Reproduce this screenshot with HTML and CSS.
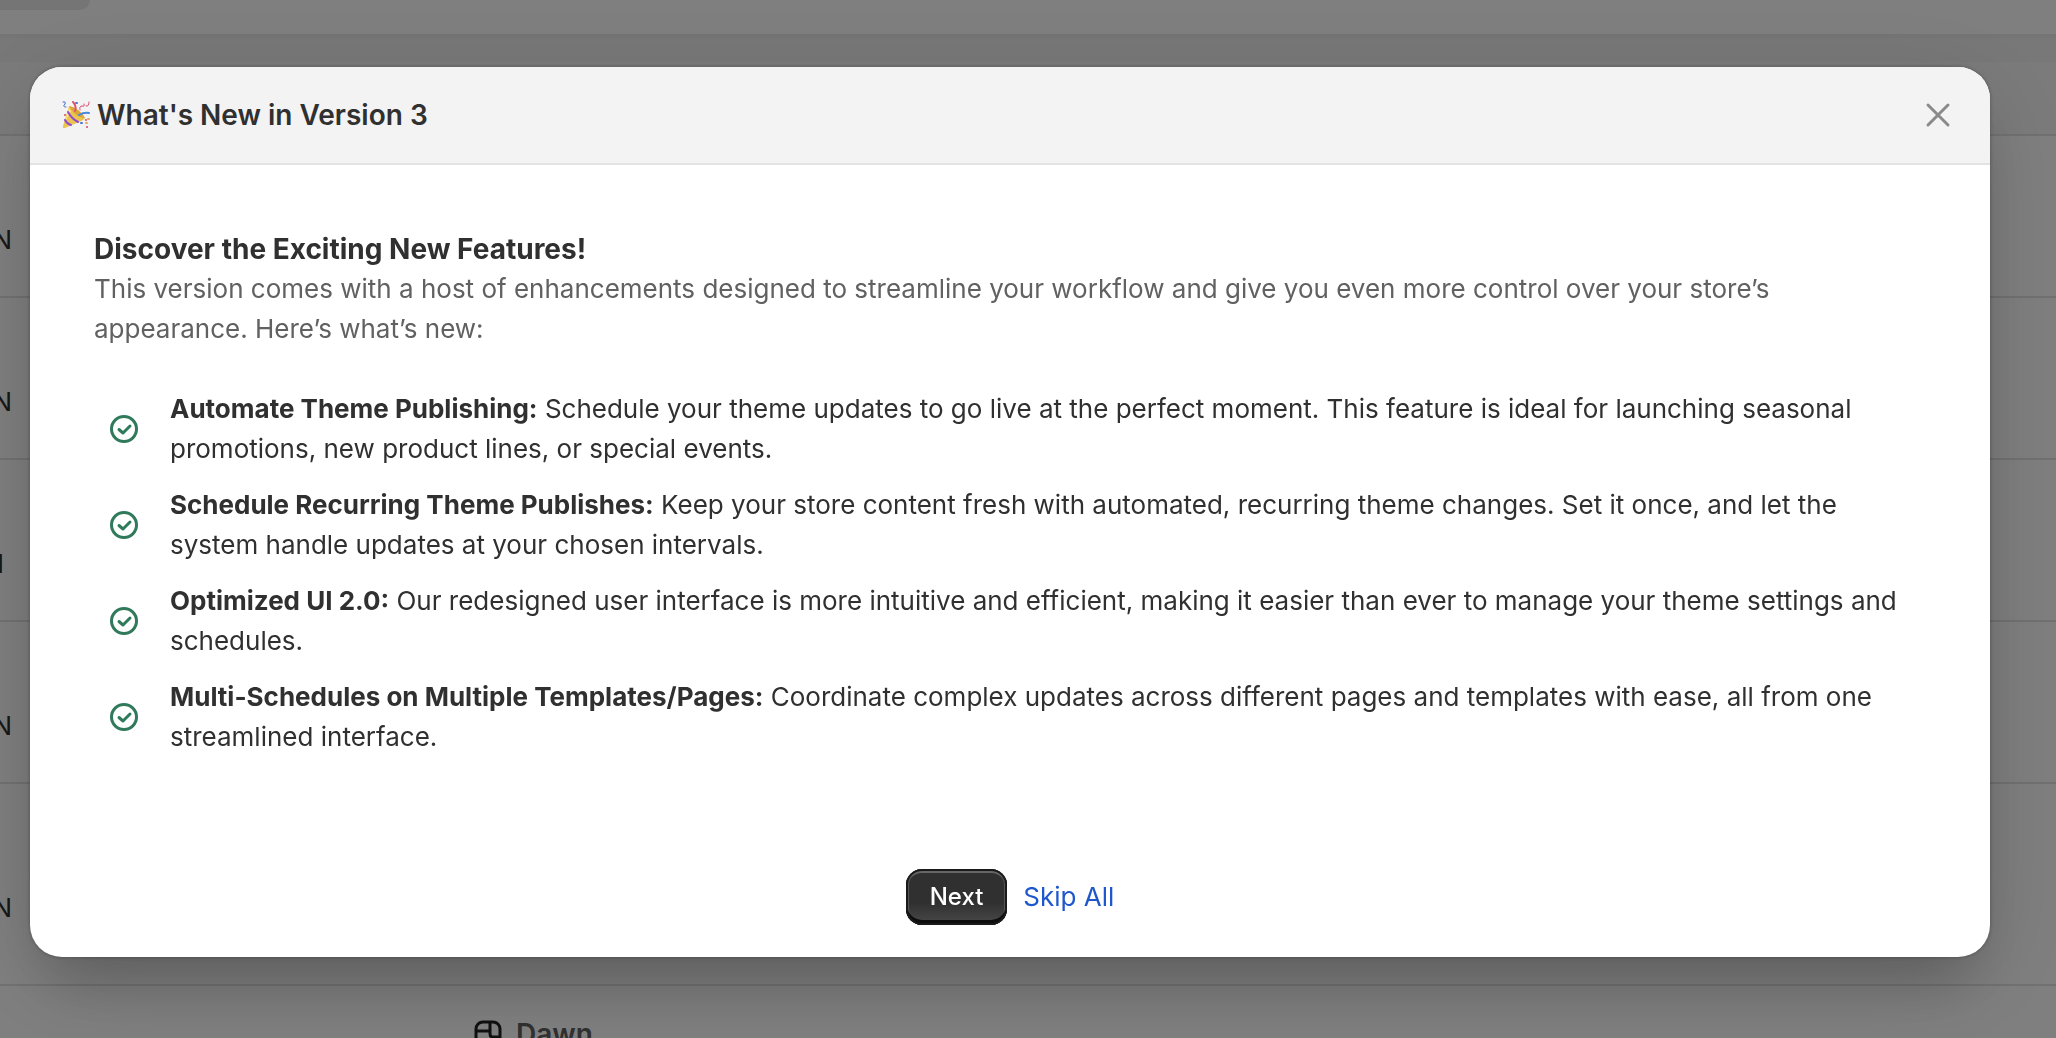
FILE: index.html
```html
<!DOCTYPE html>
<html lang="en">
<head>
    <meta charset="UTF-8">
    <meta name="viewport" content="width=device-width, initial-scale=1.0">
    <title>What's New in Version 3</title>
    <link rel="stylesheet" href="styles.css">
</head>
<body>

    <!-- schedules list behind the dialog -->
    <main class="page">
        <div class="tabs"><div class="tab"></div></div>
        <div class="table-head"></div>
        <div class="row"><span class="cell">N</span></div>
        <div class="row"><span class="cell">N</span></div>
        <div class="row"><span class="cell cell-short">N</span></div>
        <div class="row"><span class="cell">N</span></div>
        <div class="row row-tall"><span class="cell">N</span></div>
        <div class="row theme-row">
            <svg class="theme-icon" viewBox="0 0 28 28" fill="none" stroke="#222" stroke-width="3">
                <rect x="2" y="2" width="24" height="24" rx="7"/>
                <path d="M2 11h14M16 2v12q0 3 3 3h7"/>
            </svg>
            <span class="theme-name">Dawn</span>
        </div>
    </main>

    <div class="backdrop">
        <section class="modal" role="dialog" aria-modal="true" aria-labelledby="modalTitle">
            <header class="modal-header">
                <svg class="party" viewBox="0 0 28 28" fill="none" stroke-linecap="round" aria-hidden="true">
                    <path d="M7 5Q17 7 23 17Q22 19 17 21L3 27Q0 28 1 25Z" fill="#ecc54f"/>
                    <path d="M7 5Q17 7 23 17Q17 17 12 12Q8 8 7 5Z" fill="#dba637"/>
                    <path d="M7 7 3 21Q5 17 9 10Z" fill="#fbe596"/>
                    <path d="M6 11Q10 18 16 21M3 19Q5 23 9 24" stroke="#8d4bd3" stroke-width="2"/>
                    <path d="M13 10Q15 5 11 1" stroke="#e0546e" stroke-width="2"/>
                    <path d="M17 14Q22 11 27 12" stroke="#4b87e0" stroke-width="2"/>
                    <path d="M1 1Q4 0 3 3Q0 6 4 6" stroke="#4169c8" stroke-width="1"/>
                    <path d="M18 9Q17 5 20 5Q23 6 22 3M24 5Q27 6 27 1" stroke="#d9486e" stroke-width="1"/>
                    <g stroke-width="2">
                        <path d="M14 2h1M19 22h1" stroke="#4b74d6"/>
                        <path d="M3 14h0M24 19h0M25 26h0" stroke="#d9486e"/>
                        <path d="M26 18h1M24 22h1" stroke="#e5a968"/>
                    </g>
                </svg>
                <h2 class="modal-title" id="modalTitle">What's New in Version 3</h2>
                <button type="button" class="close" aria-label="Close">
                    <svg viewBox="0 0 40 40" fill="none" stroke="#8a8a8a" stroke-width="3" stroke-linecap="round">
                        <path d="M10 10 30 30M30 10 10 30"/>
                    </svg>
                </button>
            </header>

            <div class="modal-body">
                <h3 class="intro-title">Discover the Exciting New Features!</h3>
                <p class="intro">This version comes with a host of enhancements designed to streamline your workflow and give you even more control over your store’s appearance. Here’s what’s new:</p>

                <ul class="features">
                    <li>
                        <svg class="check" viewBox="0 0 40 40"><use href="#checkIcon"/></svg>
                        <p><strong>Automate Theme Publishing:</strong> Schedule your theme updates to go live at the perfect moment. This feature is ideal for launching seasonal promotions, new product lines, or special events.</p>
                    </li>
                    <li>
                        <svg class="check" viewBox="0 0 40 40"><use href="#checkIcon"/></svg>
                        <p><strong>Schedule Recurring Theme Publishes:</strong> Keep your store content fresh with automated, recurring theme changes. Set it once, and let the system handle updates at your chosen intervals.</p>
                    </li>
                    <li>
                        <svg class="check" viewBox="0 0 40 40"><use href="#checkIcon"/></svg>
                        <p><strong>Optimized UI 2.0:</strong> Our redesigned user interface is more intuitive and efficient, making it easier than ever to manage your theme settings and schedules.</p>
                    </li>
                    <li>
                        <svg class="check" viewBox="0 0 40 40"><use href="#checkIcon"/></svg>
                        <p><strong>Multi-Schedules on Multiple Templates/Pages:</strong> Coordinate complex updates across different pages and templates with ease, all from one streamlined interface.</p>
                    </li>
                </ul>
            </div>

            <footer class="modal-footer">
                <button type="button" class="next">Next</button>
                <button type="button" class="skip">Skip All</button>
            </footer>
        </section>
    </div>

    <!-- shared icon -->
    <svg width="0" height="0" class="sprite">
        <symbol id="checkIcon" viewBox="0 0 40 40">
            <g fill="none" stroke="#2f7a5b" stroke-width="3" stroke-linecap="round" stroke-linejoin="round">
                <circle cx="20" cy="20" r="12.5"/>
                <path d="m15 20.5 4 3.5 7-7"/>
            </g>
        </symbol>
    </svg>

</body>
</html>
```
FILE: styles.css
```css
*{
    box-sizing:border-box;
}

body{
    margin:0;
    font-family:Inter, "Liberation Sans", sans-serif;
    font-size:26px;
    line-height:40px;
    color:#303030;
    overflow:hidden;
}

h2, h3, p, ul{
    margin:0;
    padding:0;
}

/* page behind */
.page{
    height:100vh;
    overflow:hidden;
    background-color:#f1f1f1;
}

.tabs{
    height:38px;
    margin-bottom:24px;
    border-bottom:4px solid #ebebeb;
    background-color:white;
}

.tab{
    width:90px;
    height:10px;
    background-color:#ebebeb;
    border-bottom-right-radius:16px;
}

.table-head{
    height:74px;
    background-color:#f7f7f7;
    border-bottom:2px solid #e3e3e3;
}

.row{
    display:flex;
    height:162px;
    padding-top:84px;
    border-bottom:2px solid #e3e3e3;
    background-color:white;
}

.row-tall{
    height:202px;
    padding-top:104px;
}

.cell{
    display:flex;
    justify-content:flex-end;
    width:12px;
}

.cell-short{
    width:4px;
}

.theme-row{
    gap:14px;
    padding:28px 0 0 474px;
}

.theme-icon{
    width:28px;
    height:28px;
    margin-top:6px;
}

.theme-name{
    font-size:28px;
    font-weight:600;
    color:#616161;
}

/* dialog */
.backdrop{
    position:fixed;
    inset:0;
    padding:67px 66px 0 30px;
    background-color:rgba(0, 0, 0, 0.5);
}

.modal{
    border-radius:32px;
    background-color:white;
    box-shadow:0 0 4px rgba(0, 0, 0, 0.3), 0 20px 100px rgba(0, 0, 0, 0.12), 0 40px 60px -16px rgba(0, 0, 0, 0.2);
}

.modal-header{
    display:flex;
    align-items:center;
    gap:7px;
    padding:28px 32px;
    border-bottom:2px solid #e3e3e3;
    border-radius:32px 32px 0 0;
    background-color:#f3f3f3;
}

.party{
    width:28px;
    height:28px;
}

.modal-title{
    flex:1;
    font-size:28px;
    font-weight:600;
}

.close{
    width:40px;
    height:40px;
    padding:0;
    border:none;
    background:none;
}

.close svg{
    display:block;
}

.modal-body{
    padding:64px;
}

.intro-title{
    font-size:28px;
    font-weight:700;
}

.intro{
    color:#616161;
}

.features{
    display:grid;
    gap:16px;
    margin-top:40px;
    list-style:none;
}

.features li{
    display:grid;
    grid-template-columns:60px 1fr;
    align-items:center;
    gap:16px;
}

.features strong{
    font-weight:700;
}

.check{
    width:40px;
    height:40px;
    justify-self:center;
}

.modal-footer{
    display:flex;
    justify-content:center;
    align-items:center;
    gap:16px;
    padding:48px 32px 32px;
}

.next{
    height:56px;
    padding:0 24px;
    border:none;
    border-radius:16px;
    background:linear-gradient(#303030 60%, #4a4a4a);
    color:white;
    font:550 24px/40px Inter, "Liberation Sans", sans-serif;
    box-shadow:inset 0 0 0 2px #1a1a1a, inset 0 -4px 0 1px #0d0d0d, inset 0 4px 0 #666, inset 0 0 0 3px #555;
}

.skip{
    padding:0;
    border:none;
    background:none;
    color:#1f58cc;
    font:400 26px/40px Inter, "Liberation Sans", sans-serif;
}

.sprite{
    position:absolute;
}
```
